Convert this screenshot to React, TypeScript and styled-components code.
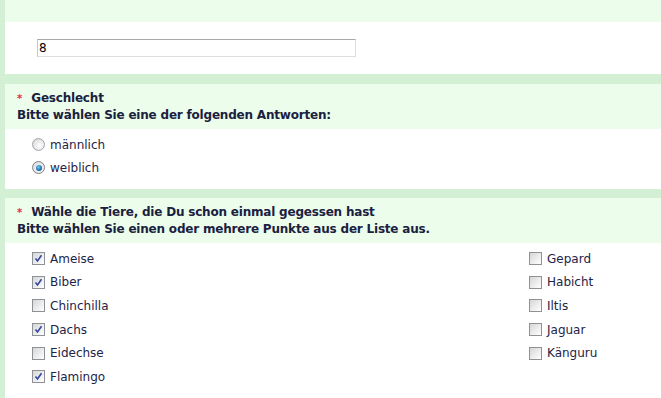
import React from "react";
import styled, { createGlobalStyle } from "styled-components";

const Global = createGlobalStyle`
  html, body { margin: 0; padding: 0; background: #d3f0d4; }
  body { font-family: "DejaVu Sans", Verdana, sans-serif; font-size: 12px; color: #1d2448; }
`;

const Page = styled.div`
  padding-left: 5px;
  height: 398px;
  overflow: hidden;
  display: flex;
  flex-direction: column;
`;

const Section = styled.section<{ $gap?: number }>`
  display: flex;
  flex-direction: column;
  margin-bottom: ${(p) => p.$gap ?? 10}px;
`;

const Header = styled.div<{ $h?: number }>`
  background: #edfdec;
  padding: 6px 12px 5px 12px;
  ${(p) => (p.$h !== undefined ? `height: ${p.$h}px; padding: 0; box-sizing: border-box;` : "")}
  font-weight: bold;
  line-height: 17px;
  letter-spacing: -0.2px;
  color: #1a2140;
`;

const Star = styled.span`
  color: #e8303a;
  font-weight: bold;
  font-size: 10px;
  margin-right: 9px;
  letter-spacing: 0;
`;

const Body = styled.div<{ $pt: number; $pb: number }>`
  background: #ffffff;
  padding: ${(p) => p.$pt}px 0 ${(p) => p.$pb}px 0;
`;

const InputRow = styled.div`
  padding-left: 32px;
`;

const TextInput = styled.div`
  box-sizing: border-box;
  width: 319px;
  height: 18px;
  border: 1px solid #dcdde0;
  border-top-color: #a8a8a8;
  border-left-color: #c8c8c8;
  padding: 1px 1px;
  font-size: 12px;
  line-height: 14px;
  color: #000;
  background: #fff;
`;

const List = styled.div`
  padding-left: 27px;
  display: flex;
  flex-direction: column;
`;

const Grid = styled.div`
  padding-left: 27px;
  display: grid;
  grid-template-columns: 497px 1fr;
  grid-auto-flow: column;
  grid-template-rows: repeat(6, 23.6px);
`;

const Option = styled.label<{ $h?: number }>`
  display: flex;
  align-items: center;
  height: ${(p) => p.$h ?? 23}px;
  gap: 5px;
  white-space: nowrap;
`;

const CheckBox = styled.span`
  box-sizing: border-box;
  width: 13px;
  height: 13px;
  border: 1px solid #8e9297;
  background: linear-gradient(135deg, #d6d6d6 0%, #efefef 60%, #ffffff 100%);
  display: inline-flex;
  align-items: center;
  justify-content: center;
  flex: none;
`;

const Radio = styled.span<{ $on?: boolean }>`
  box-sizing: border-box;
  width: 13px;
  height: 13px;
  border-radius: 50%;
  border: 1px solid ${(p) => (p.$on ? "#7d8288" : "#a2a7ac")};
  background: radial-gradient(circle at 60% 60%, #ffffff 0%, #e4e4e4 60%, #cacaca 100%);
  display: inline-flex;
  align-items: center;
  justify-content: center;
  flex: none;
  &::after {
    content: "";
    display: ${(p) => (p.$on ? "block" : "none")};
    width: 6px;
    height: 6px;
    border-radius: 50%;
    background: radial-gradient(circle at 40% 35%, #7cc8f2 0%, #1b70b0 60%, #0b3a68 100%);
  }
`;

const Check = () => (
  <svg width="9" height="9" viewBox="0 0 9 9">
    <path d="M1.5 4.5 L3.5 7 L7.5 1.2" stroke="#3346a6" strokeWidth="1.6" fill="none" />
  </svg>
);

const Box = ({ on }: { on?: boolean }) => <CheckBox>{on ? <Check /> : null}</CheckBox>;

const animals: [string, boolean][] = [
  ["Ameise", true],
  ["Biber", true],
  ["Chinchilla", false],
  ["Dachs", true],
  ["Eidechse", false],
  ["Flamingo", true],
  ["Gepard", false],
  ["Habicht", false],
  ["Iltis", false],
  ["Jaguar", false],
  ["Känguru", false],
];

export default function App() {
  return (
    <>
      <Global />
      <Page>
        <Section>
          <Header $h={22} />
          <Body $pt={17} $pb={17}>
            <InputRow>
              <TextInput>8</TextInput>
            </InputRow>
          </Body>
        </Section>
        <Section $gap={9}>
          <Header>
            <div>
              <Star>*</Star>Geschlecht
            </div>
            <div>Bitte wählen Sie eine der folgenden Antworten:</div>
          </Header>
          <Body $pt={4} $pb={10}>
            <List>
              <Option>
                <Radio />
                männlich
              </Option>
              <Option>
                <Radio $on />
                weiblich
              </Option>
            </List>
          </Body>
        </Section>
        <Section>
          <Header>
            <div>
              <Star>*</Star>Wähle die Tiere, die Du schon einmal gegessen hast
            </div>
            <div>Bitte wählen Sie einen oder mehrere Punkte aus der Liste aus.</div>
          </Header>
          <Body $pt={4} $pb={12}>
            <Grid>
              {animals.map(([name, on]) => (
                <Option key={name} $h={23.6}>
                  <Box on={on} />
                  {name}
                </Option>
              ))}
            </Grid>
          </Body>
        </Section>
      </Page>
    </>
  );
}
